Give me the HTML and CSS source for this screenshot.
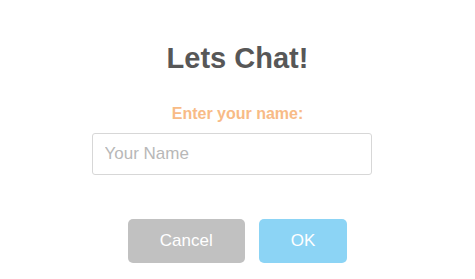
FILE: index.html
```html
<!DOCTYPE html>
<html lang="en">
<head>
    <meta charset="UTF-8">
    <title>Lets Chat!</title>
    <link rel="stylesheet" href="styles.css">
</head>
<body>
    <div class="dialog">
        <h2 class="title">Lets Chat!</h2>
        <label class="prompt" for="name">Enter your name:</label>
        <input type="text" id="name" class="name-input" placeholder="Your Name">
        <div class="actions">
            <button class="btn cancel">Cancel</button>
            <button class="btn confirm">OK</button>
        </div>
    </div>
</body>
</html>
```

FILE: styles.css
```css
body {
    margin: 0;
    background: #ffffff;
    font-family: "Liberation Sans", Arial, sans-serif;
}
.dialog {
    display: flex;
    flex-direction: column;
    align-items: center;
    padding-top: 40px;
}
.title {
    margin: 0;
    font-size: 29px;
    line-height: 36px;
    font-weight: bold;
    color: #575757;
}
.prompt {
    margin-top: 28px;
    font-size: 16px;
    line-height: 20px;
    font-weight: bold;
    color: #f8bb86;
}
.name-input {
    box-sizing: border-box;
    width: 280px;
    height: 42px;
    margin: 9px 12px 0 0;
    padding: 0 12px;
    border: 1px solid #d7d7d7;
    border-radius: 3px;
    font-family: inherit;
    font-size: 17px;
    color: #575757;
    outline: none;
}
.name-input::placeholder {
    color: #b8b8b8;
}
.actions {
    display: flex;
    gap: 14px;
    margin-top: 44px;
}
.btn {
    height: 44px;
    padding: 0 32px;
    border: none;
    border-radius: 5px;
    font-family: inherit;
    font-size: 17px;
    color: #ffffff;
    cursor: pointer;
}
.cancel {
    background: #c1c1c1;
}
.confirm {
    background: #8cd4f5;
}
```
